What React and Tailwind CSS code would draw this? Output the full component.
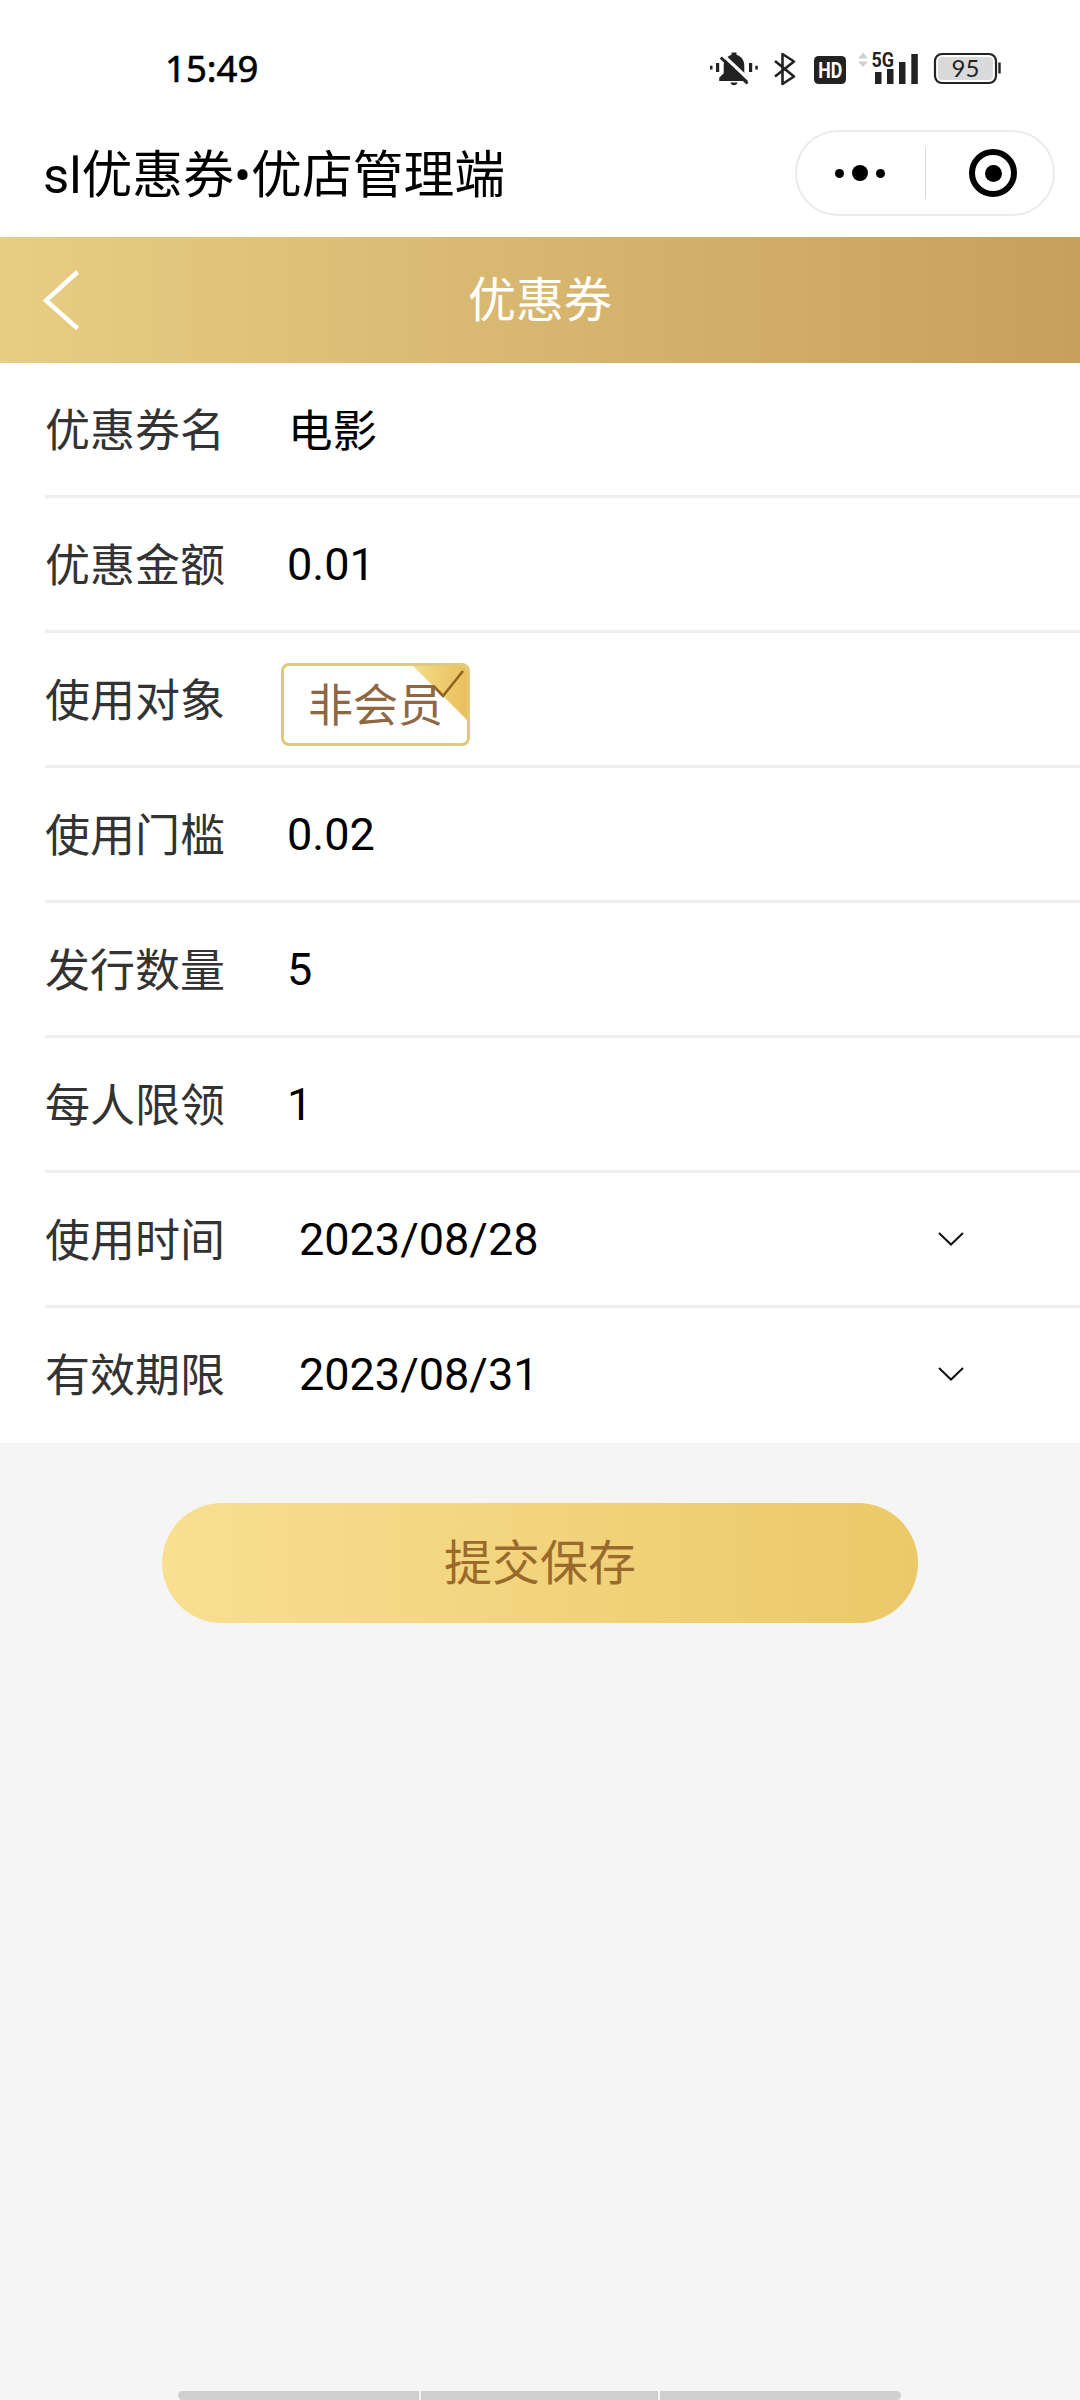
import clsx from 'clsx';

const FIELDS = [
  { label: '优惠券名', value: '电影', type: 'text' },
  { label: '优惠金额', value: '0.01' },
  { label: '使用对象', value: '非会员', type: 'tag' },
  { label: '使用门槛', value: '0.02' },
  { label: '发行数量', value: '5' },
  { label: '每人限领', value: '1' },
  { label: '使用时间', value: '2023/08/28', type: 'date' },
  { label: '有效期限', value: '2023/08/31', type: 'date' },
];

function StatusIcons() {
  return (
    <svg width="330" height="80" viewBox="0 0 330 80" fill="none">
      {/* muted bell */}
      <g fill="#222">
        <path d="M41.5 22.5h5v2.2c5 1.6 7.8 5.6 7.8 11v7.5l4.5 4.5v3.2H29.2v-3.2l4.5-4.5v-7.5c0-5.4 2.8-9.4 7.8-11z" />
        <path d="M40.5 52.5h7c-.4 1.8-1.7 2.7-3.5 2.7s-3.1-.9-3.5-2.7z" />
        <path d="M26 33h3.2v9H26zM59 33h3.2v9H59zM20 35.8h2.5v3.6H20zM65.3 35.8h2.5v3.6h-2.5z" />
      </g>
      <path d="M33.5 25.5L60.5 51" stroke="#fff" strokeWidth="3.2" />
      <path d="M30.8 27.5L57.5 53.5" stroke="#222" strokeWidth="3" />

      {/* bluetooth */}
      <path d="M85 31l19 15.5-11.5 7.5V24L104 31.5 85 46.5" stroke="#222" strokeWidth="2.6" strokeLinejoin="round" />

      {/* HD */}
      <rect x="124" y="26" width="32" height="28" rx="4.5" fill="#222" />
      <text x="128.2" y="47.7" textLength="24" lengthAdjust="spacingAndGlyphs" fontSize="21.5" fontWeight="700" fill="#fff" className="font-['Roboto',sans-serif]">HD</text>

      {/* signal */}
      <path d="M168 28.5l5-6 5 6zM168 31.5l5 5.5 5-5.5z" fill="#d0d0d0" />
      <path d="M185 42h6.5V54H185zM197 39h6.5V54H197zM209 32h6.5v22H209zM221.3 24h6.5v30h-6.5z" fill="#222" />
      <text x="181.5" y="37" textLength="22.5" lengthAdjust="spacingAndGlyphs" fontSize="20.5" fontWeight="700" fill="#222" stroke="#fff" strokeWidth="2" paintOrder="stroke" className="font-['Roboto',sans-serif]">5G</text>

      {/* battery */}
      <rect x="245" y="24" width="61" height="29" rx="7" stroke="#222" strokeWidth="2.2" />
      <rect x="248" y="27" width="55" height="23" rx="4" fill="#dadada" />
      <path d="M309.5 32.5v11" stroke="#222" strokeWidth="2.4" />
      <text x="275.5" y="46.8" textAnchor="middle" fontSize="24" fill="#222" className="font-['Lato',sans-serif]">95</text>
    </svg>
  );
}

function StatusBar() {
  return (
    <div className="flex h-[110px] items-start justify-between pt-[30px] pl-[165px] pr-[60px]">
      <span className="pt-[16px] font-['Noto_Sans',sans-serif] text-[36.5px] leading-[44px] text-black [-webkit-text-stroke:0.6px_black]">15:49</span>
      <StatusIcons />
    </div>
  );
}

function TitleBar() {
  return (
    <div className="flex h-[127px] items-start justify-between pl-[43px] pr-[25px]">
      <h1 className="pt-[30px] text-[50.8px] leading-[72px] text-black">sl优惠券•优店管理端</h1>
      {/* mini program capsule */}
      <div className="mt-[20px] flex h-[86px] w-[260px] items-center rounded-full border-2 border-[#ebebeb]">
        <div className="flex w-[128px] items-center justify-center gap-2 pr-[2px]">
          <span className="size-[9px] rounded-full bg-black" />
          <span className="size-[16px] rounded-full bg-black" />
          <span className="size-[9px] rounded-full bg-black" />
        </div>
        <span className="h-[52px] w-px bg-[#dcdcdc]" />
        <div className="flex flex-1 items-center justify-center pl-[7px]">
          <span className="flex size-[48px] items-center justify-center rounded-full border-[6px] border-black">
            <span className="size-[17px] rounded-full bg-black" />
          </span>
        </div>
      </div>
    </div>
  );
}

function PageHeader() {
  return (
    <header className="grid h-[126px] grid-cols-3 items-center bg-linear-to-r from-[#e8cd83] to-[#c7a05c]">
      <button className="justify-self-start pl-[42px]">
        <svg width="38" height="62" viewBox="0 0 38 62" fill="none">
          <path d="M35.5 3L4 31.5l31.5 28" stroke="#fff" strokeWidth="4.5" />
        </svg>
      </button>
      <h2 className="pt-px text-center text-[48px] leading-[60px] text-white">优惠券</h2>
    </header>
  );
}

function Tag({ children }) {
  return (
    <div className="relative mt-[10px] flex h-[83px] w-[189px] items-center justify-center overflow-hidden rounded-[8px] border-[3px] border-[#dfca7c]">
      <svg className="absolute top-0 right-0" width="54" height="54" viewBox="0 0 54 54" fill="none">
        <defs>
          <linearGradient id="corner" x1="0" y1="0" x2="1" y2="0">
            <stop offset="0" stopColor="#f5dc8a" />
            <stop offset="1" stopColor="#e9bf5c" />
          </linearGradient>
        </defs>
        <path d="M0 0h54v54z" fill="url(#corner)" />
      </svg>
      <span className="relative pt-[5px] text-[45px] leading-[60px] text-[#8f6743]">{children}</span>
      <svg className="absolute top-0 right-0" width="54" height="54" viewBox="0 0 54 54" fill="none">
        <path d="M21 20.5l9 9.5 20-25" stroke="#8f6420" strokeWidth="2.6" />
      </svg>
    </div>
  );
}

function FieldRow({ label, value, type, last }) {
  return (
    <div className={clsx('ml-[45px] flex h-[135px] items-center border-b-[3px]', last ? 'border-transparent' : 'border-[#eeeeee]')}>
      <span className="w-[236px] pt-[6px] text-[45px] leading-[64px] text-[#333]">{label}</span>
      {type === 'tag' && <Tag>{value}</Tag>}
      {type === 'date' && (
        <div className="flex flex-1 items-center justify-between pl-[18px] pr-[114px]">
          <span className="pt-[2px] text-[45px] leading-[64px] text-black">{value}</span>
          <svg width="30" height="18" viewBox="0 0 30 18" fill="none">
            <path d="M3 3l12 11.5L27 3" stroke="#111" strokeWidth="2" />
          </svg>
        </div>
      )}
      {type === 'text' && <span className="pt-[6px] pl-[7px] text-[44.5px] leading-[64px] text-black">{value}</span>}
      {!type && <span className="pt-[2px] pl-[6px] text-[45px] leading-[64px] text-black">{value}</span>}
    </div>
  );
}

export default function App() {
  return (
    <div className="flex h-[2400px] w-[1080px] flex-col overflow-hidden bg-[#f5f5f5] font-['Roboto','Noto_Sans_CJK_SC',sans-serif]">
      <div className="bg-white">
        <StatusBar />
        <TitleBar />
      </div>
      <PageHeader />

      <main className="bg-white">
        {FIELDS.map((f, i) => (
          <FieldRow key={f.label} {...f} last={i === FIELDS.length - 1} />
        ))}
      </main>

      <button className="mt-[60px] h-[120px] w-[756px] self-center rounded-full bg-linear-to-r from-[#f9df91] to-[#ebc968] pt-px text-[48px] leading-[60px] text-[#996a2b]">
        提交保存
      </button>

      {/* gesture bar */}
      <div className="mt-auto ml-[178px] flex h-[9px] w-[723px] gap-[2px] overflow-hidden rounded-full">
        <span className="w-[241px] bg-[#cfcfcf]" />
        <span className="w-[237px] bg-[#cfcfcf]" />
        <span className="flex-1 bg-[#cfcfcf]" />
      </div>
    </div>
  );
}
